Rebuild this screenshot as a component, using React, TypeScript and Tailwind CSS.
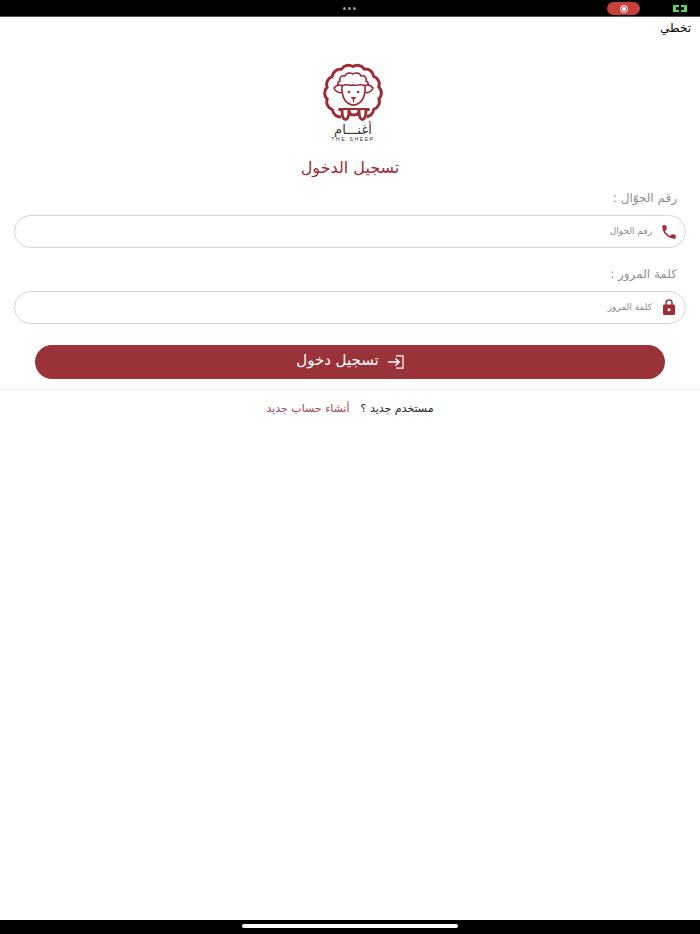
const scallops = () => {
  // wavy outer ring of the logo
  const n = 14;
  const r = 26.4;
  let d = "";
  for (let i = 0; i <= n; i++) {
    const a = (i / n) * Math.PI * 2 + 0.22;
    const x = (30 + r * Math.cos(a)).toFixed(1);
    const y = (30 + r * Math.sin(a)).toFixed(1);
    d += i === 0 ? `M${x} ${y}` : `A8 8 0 0 1 ${x} ${y}`;
  }
  return d + "Z";
};

function Logo() {
  return (
    <svg width="60" height="62" viewBox="0 0 60 62" fill="none" stroke="#9c2d37" strokeLinecap="round" strokeLinejoin="round">
      <path d={scallops()} strokeWidth="3" fill="#fff" />
      <path d="M17 25c-3-2-3-6 0-7-1-3 1-6 5-5 1-3 5-4 8-2 3-2 7-1 8 2 4-1 6 2 5 5 3 1 3 5 0 7" strokeWidth="1.6" />
      <path d="M20 23c-3-2-7-1-9 2 1 3 5 6 9 4M41 23c3-2 7-1 9 2-1 3-5 6-9 4" strokeWidth="1.6" fill="#fff" />
      <path d="M19 23c4-3 8 0 11-1 4 1 8-2 12 1 1 7-2 15-6 17-4 3-7 3-11 0-4-2-7-10-6-17z" strokeWidth="1.6" fill="#fff" />
      <circle cx="26" cy="29" r="1.3" fill="#9c2d37" stroke="none" />
      <circle cx="35" cy="29" r="1.3" fill="#9c2d37" stroke="none" />
      <path d="M28.500 34.500h4l-2 2.200zM30.500 36.500v2.500" strokeWidth="1.100" fill="#9c2d37" />
      <rect x="18" y="46" width="26" height="15" fill="#fff" stroke="none" />
      <path d="M16.500 46.500h29" strokeWidth="3" />
      <path d="M19 47c0 6 1 9.500 3.500 9.500S26 53 26 47M36 47c0 6 1 9.500 3.500 9.500S43 53 43 47M26 47c0 3 1 5 5 5s5-2 5-5" strokeWidth="3" fill="#fff" />
    </svg>
  );
}

function Field({ label, placeholder, icon }: { label: string; placeholder: string; icon: React.ReactNode }) {
  return (
    <div className="flex flex-col">
      <label className="pr-[23px] text-[12px] leading-[16px] text-[#8f8f8f]">{label}</label>
      <div className="mx-[14px] mt-[9px] flex h-[33px] items-center rounded-full border border-[#d3d3d3] pr-[4px]">
        <span className="flex w-[24px] justify-center">{icon}</span>
        <span className="mr-[5px] text-[9px] text-[#8a8a8a]">{placeholder}</span>
      </div>
    </div>
  );
}

export default function App() {
  return (
    <div dir="rtl" className="flex h-[934px] w-[700px] flex-col overflow-hidden bg-white font-['DejaVu_Sans',sans-serif]">
      <div dir="ltr" className="relative flex h-[17px] shrink-0 items-center border-b border-[#555] bg-black">
        <div className="absolute left-[343px] top-[7px] flex gap-[2px]">
          <span className="h-[3px] w-[3px] rounded-full bg-[#9a9a9a]" />
          <span className="h-[3px] w-[3px] rounded-full bg-[#9a9a9a]" />
          <span className="h-[3px] w-[3px] rounded-full bg-[#9a9a9a]" />
        </div>
        <div className="absolute left-[607px] top-[2px] flex h-[13px] w-[33px] items-center justify-center rounded-full bg-[#c8403a]">
          <span className="flex h-[8px] w-[8px] items-center justify-center rounded-full border border-white">
            <span className="h-[4px] w-[4px] rounded-full bg-white" />
          </span>
        </div>
        <svg className="absolute left-[673px] top-[5px]" width="14" height="7" viewBox="0 0 14 7" fill="#5fd35f">
          <path fillRule="evenodd" d="M0 0h6v2H3v3h3v2H0zM8 0h6v7H8V5h3V2H8z" />
        </svg>
      </div>

      <div className="flex h-[21px] items-center pr-[9px] text-[12px] text-black">تخطي</div>

      <div className="mt-[25px] flex flex-col items-center pl-[6px]">
        <Logo />
        <div className="-mt-[2px] text-[13px] leading-[14px] text-[#333]">أغنـــام</div>
        <div dir="ltr" className="-mt-[1px] font-['Liberation_Sans',sans-serif] text-[5px] leading-[6px] tracking-[1.7px] text-[#333]">THE SHEEP</div>
      </div>

      <h1 className="mt-[16px] text-center text-[16px] leading-[20px] text-[#9c2d37]">تسجيل الدخول</h1>

      <div className="mt-[12px] flex flex-col gap-[18px]">
        <Field
          label="رقم الجوّال :"
          placeholder="رقم الجوال"
          icon={
            <svg width="18" height="18" viewBox="0 0 24 24" fill="#9c2d37">
              <path d="M6.600 10.800c1.400 2.800 3.800 5.100 6.600 6.600l2.200-2.200c.3-.3.7-.4 1-.2 1.100.4 2.300.6 3.600.6.600 0 1 .4 1 1V20c0 .6-.4 1-1 1C10.600 21 3 13.400 3 4c0-.6.4-1 1-1h3.500c.6 0 1 .4 1 1 0 1.300.2 2.500.6 3.600.1.300 0 .7-.2 1z" />
            </svg>
          }
        />
        <Field
          label="كلمة المرور :"
          placeholder="كلمة المرور"
          icon={
            <svg width="18" height="19" viewBox="0 0 24 24" fill="#9c2d37">
              <path fillRule="evenodd" d="M18 8h-1V6A5 5 0 0 0 7 6v2H6a2 2 0 0 0-2 2v10a2 2 0 0 0 2 2h12a2 2 0 0 0 2-2V10a2 2 0 0 0-2-2zM9 6a3 3 0 0 1 6 0v2H9zm3 11a2 2 0 1 1 0-4 2 2 0 0 1 0 4z" />
            </svg>
          }
        />
      </div>

      <button className="mx-[35px] mt-[21px] flex h-[34px] shrink-0 items-center justify-center gap-[9px] rounded-full bg-[#9a323a] text-[15px] text-white">
        <svg width="16" height="14" viewBox="0 0 16 14" fill="none" stroke="#fff" strokeWidth="1.600">
          <path d="M8 .8h7v12.400H8" strokeWidth="1.200" />
          <path d="M0 7h11M7.500 3.500 11 7l-3.500 3.500" />
        </svg>
        <span className="-mt-[3px]">تسجيل دخول</span>
      </button>

      <div className="mt-[10px] border-t border-[#f1f1f1] pt-[11px] text-center text-[11px] leading-[16px]">
        <span className="text-[#222]">مستخدم جديد ؟</span>
        <span className="mr-[11px] text-[#a8454e]">أنشاء حساب جديد</span>
      </div>

      <div className="mt-auto flex h-[14px] items-start justify-center bg-black pt-[4px]">
        <span className="h-[4px] w-[216px] rounded-full bg-white" />
      </div>
    </div>
  );
}
